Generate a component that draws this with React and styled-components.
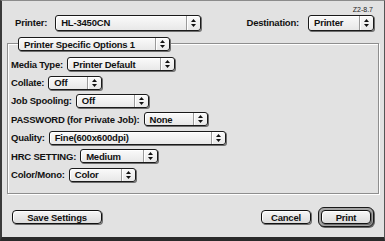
import styled, { createGlobalStyle } from 'styled-components'

const GlobalStyle = createGlobalStyle`
  html, body {
    margin: 0;
    padding: 0;
    background: #e2e2e2;
  }
  body {
    font-family: 'Liberation Sans', Arial, sans-serif;
  }
`

const Window = styled.div`
  box-sizing: border-box;
  width: 385px;
  height: 241px;
  background: #e2e2e2;
  border-top: 1px solid #8c8c8c;
  border-left: 2px solid #3a3a3a;
  border-right: 1px solid #555;
  border-bottom: 4px solid #2a2a2a;
  display: flex;
  flex-direction: column;
  color: #111;
  font-weight: bold;
  font-size: 9.5px;
  letter-spacing: -0.2px;
`

const Annot = styled.div`
  height: 8px;
  margin-top: 5px;
  padding-right: 11px;
  text-align: right;
  font-size: 7px;
  line-height: 8px;
  font-weight: normal;
  letter-spacing: 0;
  color: #222;
`

const TopRow = styled.div`
  display: flex;
  align-items: center;
  height: 17px;
  padding: 0 10px 0 13px;
`

const Label = styled.span`
  white-space: nowrap;
  margin-right: ${(p) => p.$gap ?? 4}px;
`

const Spacer = styled.div`
  flex: 1;
`

const Popup = styled.div`
  box-sizing: border-box;
  display: flex;
  align-items: stretch;
  flex-shrink: 0;
  width: ${(p) => p.$w}px;
  height: ${(p) => p.$h || 14}px;
  border: 1px solid #1a1a1a;
  border-radius: 3px;
  background: linear-gradient(#fafafa, #e8e8e8);
  box-shadow: 1px 1px 0 #6e6e6e, inset 1px 1px 0 #fff;
`

const PopupText = styled.span`
  flex: 1;
  display: flex;
  align-items: center;
  padding-left: 5px;
  white-space: nowrap;
  overflow: hidden;
`

const Arrows = styled.span`
  width: 13px;
  display: flex;
  align-items: center;
  justify-content: center;
  border-left: 1px solid #9a9a9a;
  box-shadow: inset 1px 0 0 #fff;
`

const Group = styled.div`
  box-sizing: border-box;
  height: 151px;
  margin: 12px 5px 0;
  padding-left: 3px;
  border: 1px solid #8e8e8e;
  box-shadow: 1px 1px 0 #fff, inset 1px 1px 0 #fff;
  display: flex;
  flex-direction: column;
`

const Tab = styled(Popup)`
  margin: -7px 0 4px 7px;
`

const Row = styled.div`
  display: flex;
  align-items: center;
  height: 18.4px;
`

const ButtonRow = styled.div`
  display: flex;
  align-items: center;
  height: 20px;
  margin-top: 13px;
  padding: 0 10px 0 10px;
`

const Button = styled.div`
  box-sizing: border-box;
  width: ${(p) => p.$w}px;
  height: 14px;
  display: flex;
  align-items: center;
  justify-content: center;
  border: 1px solid #111;
  border-radius: 4px;
  background: linear-gradient(#f6f6f6, #dcdcdc);
  box-shadow: 1px 1px 0 #6e6e6e, inset 1px 1px 0 #fff;
`

const DefaultRing = styled.div`
  box-sizing: border-box;
  width: 56px;
  height: 20px;
  margin-left: 7px;
  padding: 2px;
  border: 1px solid #1a1a1a;
  border-radius: 6px;
  background: #a4a4a4;
  box-shadow: 1px 1px 0 #666;
`

const UpDown = () => (
  <svg width="5" height="8" viewBox="0 0 5 8">
    <polygon points="0,3 2.5,0 5,3" fill="#111" />
    <polygon points="0,5 5,5 2.5,8" fill="#111" />
  </svg>
)

const Select = ({ w, h, children }) => (
  <Popup $w={w} $h={h}>
    <PopupText>{children}</PopupText>
    <Arrows>
      <UpDown />
    </Arrows>
  </Popup>
)

const options = [
  { label: 'Media Type:', value: 'Printer Default', w: 108 },
  { label: 'Collate:', value: 'Off', w: 54 },
  { label: 'Job Spooling:', value: 'Off', w: 73 },
  { label: 'PASSWORD (for Private Job):', value: 'None', w: 64 },
  { label: 'Quality:', value: 'Fine(600x600dpi)', w: 177 },
  { label: 'HRC SETTING:', value: 'Medium', w: 78 },
  { label: 'Color/Mono:', value: 'Color', w: 67 },
]

const App = () => {
  return (
    <>
      <GlobalStyle />
      <Window>
        <Annot>Z2-8.7</Annot>
        <TopRow>
          <Label $gap={8}>Printer:</Label>
          <Select w={146} h={16}>HL-3450CN</Select>
          <Spacer />
          <Label $gap={9}>Destination:</Label>
          <Select w={66} h={16}>Printer</Select>
        </TopRow>

        <Group>
          <Tab $w={152} $h={14}>
            <PopupText>Printer Specific Options 1</PopupText>
            <Arrows>
              <UpDown />
            </Arrows>
          </Tab>
          {options.map((opt) => (
            <Row key={opt.label}>
              <Label>{opt.label}</Label>
              <Select w={opt.w}>{opt.value}</Select>
            </Row>
          ))}
        </Group>

        <ButtonRow>
          <Button $w={90}>Save Settings</Button>
          <Spacer />
          <Button $w={50}>Cancel</Button>
          <DefaultRing>
            <Button $w={50}>Print</Button>
          </DefaultRing>
        </ButtonRow>
      </Window>
    </>
  )
}

export default App
